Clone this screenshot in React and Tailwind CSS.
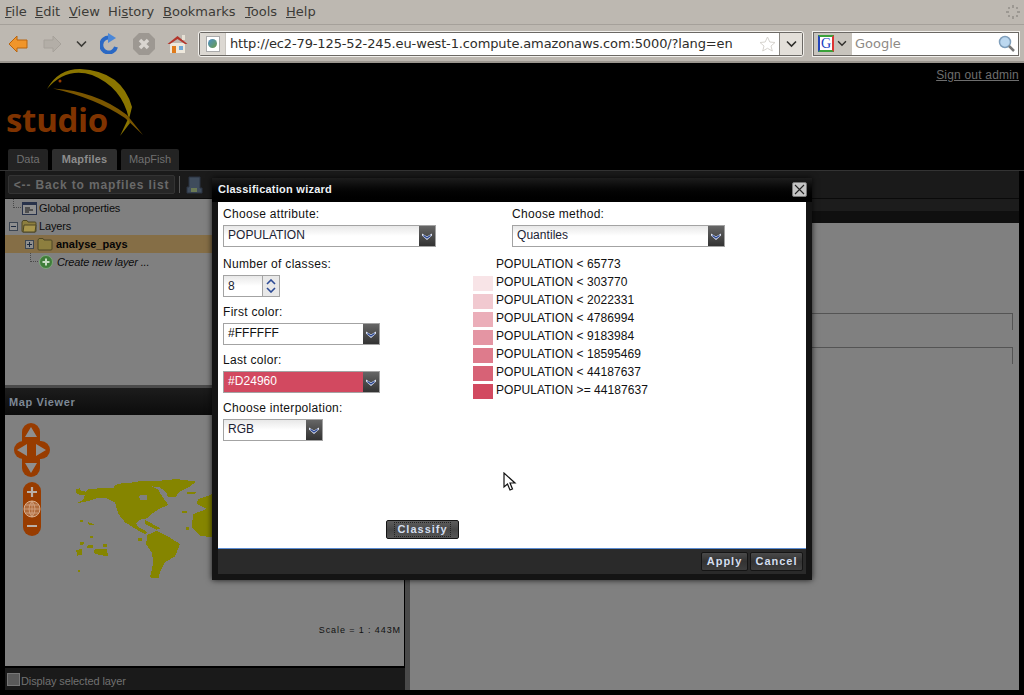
import React from 'react';

const MENU = [
  ['F', 'ile', 'w-[30px]'],
  ['E', 'dit', 'w-[34px]'],
  ['V', 'iew', 'w-[39px]'],
  ['Hi', 'story', 'w-[55px]', 's'],
  ['B', 'ookmarks', 'w-[82px]'],
  ['T', 'ools', 'w-[41px]'],
  ['H', 'elp', 'w-[40px]'],
];

const LEGEND = [
  ['POPULATION < 65773', 'bg-white'],
  ['POPULATION < 303770', 'bg-[#f8e4e7]'],
  ['POPULATION < 2022331', 'bg-[#f1c9d0]'],
  ['POPULATION < 4786994', 'bg-[#ebaeb9]'],
  ['POPULATION < 9183984', 'bg-[#e495a3]'],
  ['POPULATION < 18595469', 'bg-[#de7b8c]'],
  ['POPULATION < 44187637', 'bg-[#d76276]'],
  ['POPULATION >= 44187637', 'bg-[#d24960]'],
];

const TriggerIcon = () => (
  <svg width="12" height="9" viewBox="0 0 12 9" fill="none">
    <path d="M1 1.5 L6 4.5 L11 1.5 L11 3.5 L6 8 L1 3.5 Z" fill="#dfe6f7" />
    <path d="M2.5 3.5 L6 6 L9.5 3.5" stroke="#25408f" strokeWidth="1.3" />
  </svg>
);

const Combo = ({ value, width, tone }) => (
  <div className={`flex h-[22px] border border-[#a3a3a3] ${width}`}>
    <div className={`flex-1 pl-1 pb-[3px] flex items-center text-[12px] tracking-[0.05px] ${tone || 'bg-gradient-to-b from-[#e8e8e8] via-white to-white text-[#1c2333]'}`}>
      {value}
    </div>
    <div className="w-[16px] bg-gradient-to-b from-[#666] to-[#333] flex items-center justify-center">
      <TriggerIcon />
    </div>
  </div>
);

const Label = ({ children, className }) => (
  <div className={`text-[12px] leading-[14px] tracking-[0.3px] text-[#111] ${className || ''}`}>{children}</div>
);

const DarkButton = ({ children, className }) => (
  <div className={`flex items-center justify-center rounded-[2px] border border-[#151515] bg-gradient-to-b text-[11px] font-bold tracking-[1px] text-[#d3deee] ${className}`}>
    {children}
  </div>
);

const Folder = ({ open }) => (
  <svg width="16" height="14" viewBox="0 0 16 14">
    <path d="M1 3 L1 12 Q1 13 2 13 L14 13 Q15 13 15 12 L15 4 Q15 3 14 3 L7 3 L6 1.5 L2 1.5 Z" fill="#8d7f3f" stroke="#4d4726" />
    {open && <path d="M3 6 L15 6 L14 13 L2 13 Z" fill="#a8964c" stroke="#4d4726" />}
  </svg>
);

const Expander = ({ minus }) => (
  <div className="w-[9px] h-[9px] border border-[#3d4652] bg-[#8f8f8f] relative">
    <div className="absolute left-[1px] right-[1px] top-[3px] h-px bg-[#1d2a3f]" />
    {!minus && <div className="absolute top-[1px] bottom-[1px] left-[3px] w-px bg-[#1d2a3f]" />}
  </div>
);

const Connector = () => (
  <div className="w-[8px] h-[9px] self-start border-l border-b border-dotted border-[#4a4a4a] shrink-0" />
);

const BrowserToolbar = () => (
  <div className="h-[38px] bg-[#bdb8b1] border-b-2 border-[#9b968f] flex items-center pl-[8px] pr-[5px] pt-px">
    <svg width="20" height="18" viewBox="0 0 20 18" className="mr-[15px] shrink-0">
      <path d="M1 9 L9 1 L9 5 L19 5 L19 13 L9 13 L9 17 Z" fill="#f0952a" stroke="#b9640f" />
    </svg>
    <svg width="19" height="18" viewBox="0 0 19 18" className="mr-[14px] shrink-0">
      <path d="M18 9 L10 1 L10 5 L1 5 L1 13 L10 13 L10 17 Z" fill="#b3aea7" stroke="#a6a19a" />
    </svg>
    <svg width="11" height="8" viewBox="0 0 11 8" className="mr-[13px] shrink-0">
      <path d="M1 1.5 L5.5 6 L10 1.5" fill="none" stroke="#3c3b37" strokeWidth="1.6" />
    </svg>
    <svg width="20" height="21" viewBox="0 0 20 21" className="mr-[12px] shrink-0">
      <path d="M16 14 A7.5 7.5 0 1 1 9 4.5" fill="none" stroke="#2a68c4" strokeWidth="4" />
      <path d="M8 0 L16 5 L8 10 Z" fill="#4a87d8" />
    </svg>
    <svg width="24" height="24" viewBox="0 0 24 24" className="mr-[11px] shrink-0">
      <path d="M7 1 L17 1 L23 7 L23 17 L17 23 L7 23 L1 17 L1 7 Z" fill="#9d9892" />
      <path d="M8 8 L16 16 M16 8 L8 16" stroke="#d9d5d0" strokeWidth="3.5" />
    </svg>
    <svg width="21" height="20" viewBox="0 0 21 20" className="mr-[11px] shrink-0">
      <path d="M3 9 L18 9 L18 19 L3 19 Z" fill="#eee8dc" />
      <path d="M0.5 10 L10.5 2 L20.5 10 L18 10 L10.5 5 L3 10 Z" fill="#b3352a" />
      <rect x="15" y="1" width="3" height="5" fill="#e6e0d4" />
      <rect x="5" y="12" width="4" height="7" fill="#e07b1a" />
      <rect x="12" y="12" width="4" height="4" fill="#6fa9d8" />
    </svg>
    <div className="w-[604px] shrink-0 h-[24px] flex items-stretch border border-[#6b6864] outline outline-1 outline-[#f2f0ec] rounded-[2px] bg-white mr-[10px]">
      <div className="w-[26px] shrink-0 bg-[#dcd8d2] flex items-center justify-center border-r border-[#c9c5bf]">
        <div className="w-[14px] h-[16px] bg-white border border-[#aaa] flex items-center justify-center">
          <div className="w-[9px] h-[9px] rounded-full bg-gradient-to-br from-[#4f8bc7] to-[#6c9a3c]" />
        </div>
      </div>
      <div className="flex-1 pl-[4px] flex items-center text-[13px] tracking-[-0.13px] font-['DejaVu_Sans',sans-serif] text-[#2e2d2a] whitespace-nowrap">
        http://ec2-79-125-52-245.eu-west-1.compute.amazonaws.com:5000/?lang=en
      </div>
      <div className="w-[24px] shrink-0 flex items-center justify-center">
        <svg width="17" height="16" viewBox="0 0 17 16">
          <path d="M8.5 1 L10.8 6 L16 6.5 L12 10 L13.3 15 L8.5 12.3 L3.7 15 L5 10 L1 6.5 L6.2 6 Z" fill="#fff" stroke="#d6d3ce" />
        </svg>
      </div>
      <div className="w-[23px] shrink-0 bg-[#e3dfd9] border-l border-[#8a8782] flex items-center justify-center">
        <svg width="11" height="8" viewBox="0 0 11 8">
          <path d="M1 1.5 L5.5 6 L10 1.5" fill="none" stroke="#2e2d2a" strokeWidth="1.6" />
        </svg>
      </div>
    </div>
    <div className="flex-1 h-[24px] flex items-stretch border border-[#6b6864] outline outline-1 outline-[#f2f0ec] bg-white">
      <div className="w-[38px] bg-[#c8c4bd] flex items-center pl-[4px] gap-[3px]">
        <div className="w-[16px] h-[17px] bg-white border-t-2 border-t-[#3aa13a] border-r-2 border-r-[#d33] border-b-2 border-b-[#3aa13a] border-l-2 border-l-[#2244bb] flex items-center justify-center text-[14px] leading-none font-['Liberation_Serif',serif] text-[#1a3cc0]">
          G
        </div>
        <svg width="10" height="7" viewBox="0 0 11 8">
          <path d="M1 1.5 L5.5 6 L10 1.5" fill="none" stroke="#2e2d2a" strokeWidth="1.6" />
        </svg>
      </div>
      <div className="flex-1 pl-[3px] flex items-center text-[13px] font-['DejaVu_Sans',sans-serif] text-[#8e8a85]">Google</div>
      <div className="w-[20px] flex items-center">
        <svg width="17" height="17" viewBox="0 0 17 17">
          <circle cx="7" cy="7" r="5.5" fill="#bcd8f0" stroke="#7f9fbc" strokeWidth="1.5" />
          <path d="M11 11 L16 16" stroke="#777" strokeWidth="2.5" />
        </svg>
      </div>
    </div>
  </div>
);

const MapViewer = () => (
  <div className="relative flex-1 bg-[#808080] overflow-hidden">
    <svg width="155" height="110" viewBox="0 0 465 330" className="absolute left-[55px] top-[54px]" shapeRendering="crispEdges">
      <path
        fill="#858500"
        fillRule="evenodd"
        d="M48,60 L60,58 L62,66 L78,68 L85,60 L120,58 L160,58 L165,48 L190,42 L225,40 L240,36 L290,36 L350,30 L410,38 L385,55 L360,68 L345,85 L325,85 L318,70 L300,55 L275,52 L295,62 L305,80 L325,108 L300,118 L275,135 L262,148 L240,152 L228,162 L235,175 L255,185 L262,192 L255,195 L240,188 L215,172 L195,160 L175,135 L165,100 L140,88 L110,88 L90,95 L50,103 L70,92 L75,78 L50,76 Z M235,80 L262,78 L262,92 L240,92 Z"
      />
      <path fill="#858500" d="M255,152 L300,178 L290,182 L255,165 Z" />
      <path fill="#858500" d="M262,198 L290,185 L320,200 L360,225 L345,262 L315,280 L300,310 L295,328 L270,325 L280,280 L275,250 L258,225 Z" />
      <path fill="#858500" d="M415,90 L445,80 L455,75 L455,205 L420,200 L395,175 L400,135 L440,120 L410,105 Z" />
      <path fill="#858500" d="M105,240 L140,240 L145,262 L120,258 L100,252 Z M48,243 L66,240 L66,258 L52,260 Z M60,218 L72,218 L70,228 L60,228 Z M80,230 L100,228 L100,238 L80,238 Z M60,154 L70,154 L70,160 L60,160 Z M85,160 L102,165 L100,170 L85,166 Z M380,68 L408,70 L405,76 L382,76 Z M365,125 L380,125 L380,133 L365,133 Z M378,174 L386,174 L386,182 L378,182 Z M235,207 L245,207 L245,215 L235,215 Z M54,303 L60,303 L60,309 L54,309 Z M90,200 L98,200 L98,206 L90,206 Z M130,226 L140,226 L140,234 L130,234 Z" />
    </svg>
    <svg width="38" height="56" viewBox="0 0 38 56" className="absolute left-[8px] top-[7px]">
      <rect x="9" y="1" width="18" height="54" rx="9" fill="#983c00" />
      <rect x="1" y="19" width="36" height="18" rx="9" fill="#983c00" />
      <path d="M18 5 L24 15 L12 15 Z M18 51 L24 41 L12 41 Z M4 28 L14 22 L14 34 Z M33 28 L23 22 L23 34 Z" fill="#8f8f8f" />
    </svg>
    <svg width="18" height="54" viewBox="0 0 18 54" className="absolute left-[18px] top-[67px]">
      <rect width="18" height="54" rx="9" fill="#983c00" />
      <path d="M4 10 L14 10 M9 5 L9 15 M4 44 L14 44" stroke="#b9b0a8" strokeWidth="2.2" />
      <circle cx="9" cy="27" r="8" fill="#b06b3c" stroke="#d8b090" />
      <path d="M1 27 L17 27 M2.5 23 L15.5 23 M2.5 31 L15.5 31 M9 19 L9 35 M9 19 Q3 27 9 35 M9 19 Q15 27 9 35" fill="none" stroke="#d8b090" strokeWidth="0.7" />
    </svg>
    <div className="absolute right-[3px] bottom-[30px] text-[9px] leading-[12px] tracking-[0.9px] text-[#111]">Scale = 1 : 443M</div>
  </div>
);

const LeftPanel = () => (
  <div className="w-[400px] flex flex-col">
    <div className="h-[186px] bg-[#808080] text-[11px] tracking-[-0.15px] text-[#0c0c0c]">
      <div className="h-[18px] flex items-center pl-[8px]">
        <Connector />
        <svg width="15" height="13" viewBox="0 0 15 13" className="ml-px">
          <rect x="0.5" y="0.5" width="14" height="12" fill="#8f8f8f" stroke="#28324a" />
          <rect x="1" y="1" width="13" height="2" fill="#28324a" />
          <path d="M3 6 L8 6 M3 8 L11 8 M3 10 L7 10" stroke="#111" />
        </svg>
        <span className="ml-[2px]">Global properties</span>
      </div>
      <div className="h-[18px] flex items-center pl-[4px] gap-[3px]">
        <Expander minus />
        <Folder open />
        <span className="-ml-[1px]">Layers</span>
      </div>
      <div className="h-[18px] flex items-center pl-[20px] gap-[3px] bg-[#856e46]">
        <Expander />
        <Folder />
        <span className="font-bold tracking-normal text-[#050505]">analyse_pays</span>
      </div>
      <div className="h-[18px] flex items-center pl-[25px]">
        <Connector />
        <svg width="14" height="14" viewBox="0 0 14 14" className="ml-px">
          <circle cx="7" cy="7" r="6.5" fill="#3f7d3a" stroke="#7da87a" />
          <path d="M3.5 7 L10.5 7 M7 3.5 L7 10.5" stroke="#c8dcc4" strokeWidth="2" />
        </svg>
        <span className="italic ml-[4px]">Create new layer ...</span>
      </div>
    </div>
    <div className="h-[3px] bg-[#4a4a4a]" />
    <div className="h-[27px] pt-[2px] bg-gradient-to-b from-[#1c1c1c] to-[#0c0c0c] flex items-center pl-[4px] text-[11px] font-bold text-[#7d8896] tracking-[0.6px]">
      Map Viewer
    </div>
    <div className="flex-1 flex flex-col border-r border-black">
      <MapViewer />
    </div>
    <div className="h-[2px] bg-black" />
    <div className="h-[22px] bg-[#1a1a1a] flex items-center pl-[2px] text-[11px] text-[#717171] tracking-[-0.1px]">
      <div className="w-[13px] h-[13px] border border-[#777] bg-[#5a5a5a] mr-px" />
      <span className="mt-[4px]">Display selected layer</span>
    </div>
  </div>
);

const RightPanel = () => (
  <div className="w-[609px] flex flex-col">
    <div className="h-[12px] bg-[#1c1c1c]" />
    <div className="h-[12px] bg-[#0f0f0f]" />
    <div className="flex-1 bg-[#808080] pl-[6px] pr-[6px] pt-[90px]">
      <div className="h-[17px] border-t border-r border-[#545454]" />
      <div className="h-[17px] mt-[17px] border-t border-r border-[#545454]" />
    </div>
  </div>
);

const Wizard = () => (
  <div className="absolute left-[212px] top-[178px] w-[600px] h-[402px] flex flex-col bg-[#141414] shadow-[0_0_6px_rgba(0,0,0,0.8)]">
    <div className="h-[24px] pb-[2px] flex items-center justify-between pl-[6px] pr-[5px] bg-gradient-to-b from-[#1d1d1d] to-black">
      <span className="text-[11px] font-bold tracking-[0.25px] text-[#eef2f6]">Classification wizard</span>
      <div className="w-[15px] h-[15px] rounded-[2px] bg-[#c4c4c4] border border-[#777] flex items-center justify-center">
        <svg width="11" height="11" viewBox="0 0 11 11">
          <path d="M1 1 L10 10 M10 1 L1 10" stroke="#222" strokeWidth="1.1" />
        </svg>
      </div>
    </div>
    <div className="mx-[6px] h-[347px] bg-white border-b border-[#5b8bd0] flex">
      <div className="w-[255px] pl-[5px] pt-[5px] flex flex-col">
        <Label className="mb-[4px]">Choose attribute:</Label>
        <Combo value="POPULATION" width="w-[213px]" />
        <Label className="mt-[10px] mb-[4px]">Number of classes:</Label>
        <div className="flex h-[22px] w-[57px] border border-[#a3a3a3]">
          <div className="flex-1 pl-1 pb-[1px] flex items-center text-[12px] text-[#1c2333] bg-gradient-to-b from-[#e8e8e8] via-white to-white">8</div>
          <div className="w-[17px] border-l border-[#a3a3a3] flex flex-col items-center justify-center gap-[2px] bg-[#e8e8e8]">
            <svg width="10" height="6" viewBox="0 0 10 6"><path d="M1 5 L5 1 L9 5" fill="none" stroke="#2c4a96" strokeWidth="1.6" /></svg>
            <svg width="10" height="6" viewBox="0 0 10 6"><path d="M1 1 L5 5 L9 1" fill="none" stroke="#2c4a96" strokeWidth="1.6" /></svg>
          </div>
        </div>
        <Label className="mt-[8px] mb-[4px]">First color:</Label>
        <Combo value="#FFFFFF" width="w-[157px]" tone="bg-white text-[#111]" />
        <Label className="mt-[8px] mb-[4px]">Last color:</Label>
        <Combo value="#D24960" width="w-[157px]" tone="bg-[#d24960] text-white" />
        <Label className="mt-[8px] mb-[4px]">Choose interpolation:</Label>
        <Combo value="RGB" width="w-[100px]" />
        <DarkButton className="w-[73px] h-[19px] mt-[79px] ml-[163px] from-[#5e5e5e] via-[#474747] to-[#565656] border-[#333]">
          <span className="px-[2px] border border-dotted border-[#222] leading-[13px]">Classify</span>
        </DarkButton>
      </div>
      <div className="flex-1 pt-[5px]">
        <div className="ml-[39px]">
          <Label className="mb-[4px]">Choose method:</Label>
          <Combo value="Quantiles" width="w-[213px]" />
        </div>
        <div className="mt-[9px]">
          {LEGEND.map(([text, swatch]) => (
            <div key={text} className="h-[18px] flex items-center gap-[3px]">
              <div className={`w-[20px] h-[15px] ${swatch}`} />
              <span className="text-[12px] tracking-[0.07px] text-[#111] -mt-[2px]">{text}</span>
            </div>
          ))}
        </div>
      </div>
    </div>
    <div className="mx-[6px] h-[25px] bg-[#2a2a2a] flex items-center justify-end gap-[2px] pr-[3px]">
      <DarkButton className="w-[47px] h-[19px] from-[#4a4a4a] via-[#333] to-[#3e3e3e]">Apply</DarkButton>
      <DarkButton className="w-[53px] h-[19px] from-[#4a4a4a] via-[#333] to-[#3e3e3e]">Cancel</DarkButton>
    </div>
  </div>
);

const App = () => {
  return (
    <div className="relative w-[1024px] h-[695px] overflow-hidden bg-black flex flex-col font-['Liberation_Sans',sans-serif]">
      {/* browser chrome */}
      <div className="h-[25px] bg-[#bdb8b1] border-b border-[#a5a09a] flex items-center pl-[5px] text-[13px] font-['DejaVu_Sans',sans-serif] text-[#3c3b37]">
        {MENU.map(([head, rest, width, tail]) => (
          <span key={head} className={width}>
            {tail ? head : <span className="underline">{head}</span>}
            {tail ? <><span className="underline">{tail}</span>{rest.slice(1)}</> : rest}
          </span>
        ))}
        <svg width="16" height="16" viewBox="0 0 16 16" className="ml-auto mr-[3px]">
          <g fill="#9c9892">
            <rect x="7" y="1" width="2" height="3" /><rect x="7" y="12" width="2" height="3" />
            <rect x="1" y="7" width="3" height="2" /><rect x="12" y="7" width="3" height="2" />
            <rect x="3" y="3" width="2" height="2" /><rect x="11" y="3" width="2" height="2" />
            <rect x="3" y="11" width="2" height="2" /><rect x="11" y="11" width="2" height="2" />
          </g>
        </svg>
      </div>
      <BrowserToolbar />

      {/* app header */}
      <div className="h-[86px] relative flex justify-between">
        <div className="relative w-[150px]">
          <svg width="150" height="80" viewBox="0 0 150 80" className="absolute left-0 top-0">
            <path d="M47 26 Q58 6 80 6 Q122 8 132 44 L129 56 Q122 24 92 12 Q66 4 47 26 Z" fill="#8a7500" />
            <path d="M53 25.5 Q96 28 127 52 L143 72 L125 55 Q95 35 53 25.5 Z" fill="#7a5600" />
            <path d="M128 56 L120 73 L130 60 Z" fill="#8a7500" />
            <circle cx="60" cy="18" r="1.5" fill="#983c00" />
          </svg>
          <span className="absolute left-[6px] top-[37px] text-[33px] leading-[40px] font-bold tracking-[-0.3px] text-[#7f3300] font-['Open_Sans',sans-serif]">studio</span>
        </div>
        <a className="mt-[6px] mr-[5px] h-[14px] text-[12px] leading-[13px] tracking-[0.2px] text-[#6e6e6e] underline">Sign out admin</a>
      </div>

      {/* tabs */}
      <div className="h-[22px] border-b border-[#333] flex items-end pl-[8px] gap-[4px] text-[11px]">
        <div className="w-[40px] h-[21px] rounded-t-[2px] bg-[#232323] text-[#707070] flex items-center justify-center">Data</div>
        <div className="w-[65px] h-[21px] rounded-t-[2px] bg-[#2e2e2e] text-[#8c8c8c] font-bold tracking-[0.2px] flex items-center justify-center">Mapfiles</div>
        <div className="w-[58px] h-[21px] rounded-t-[2px] bg-[#232323] text-[#707070] flex items-center justify-center">MapFish</div>
      </div>
      <div className="h-[28px] mx-[5px] bg-[#1a1a1a] border-b border-[#0a0a0a] flex items-center pl-[3px]">
        <div className="w-[167px] h-[19px] rounded-[2px] bg-[#262626] border border-[#333] flex items-center justify-center text-[12px] font-bold tracking-[0.85px] text-[#696969]">
          &lt;-- Back to mapfiles list
        </div>
        <div className="w-px h-[17px] bg-[#555] mx-[4px]" />
        <svg width="17" height="18" viewBox="0 0 17 18" className="ml-[2px]">
          <path d="M3 1 L14 1 L14 12 L16 12 L16 17 L1 17 L1 11 L3 11 Z" fill="#3f4c5c" stroke="#2a3340" />
          <rect x="5" y="12" width="6" height="4" fill="#6b7a55" />
        </svg>
      </div>

      {/* panels */}
      <div className="flex-1 flex mx-[5px] mb-[5px]">
        <LeftPanel />
        <div className="w-[5px] bg-[#4a4a4a]" />
        <RightPanel />
      </div>

      <Wizard />

      {/* mouse pointer */}
      <svg width="14" height="20" viewBox="0 0 14 20" className="absolute left-[503px] top-[472px]">
        <path d="M1 1 L1 15 L4.5 12 L7 18 L9.5 17 L7 11 L12 11 Z" fill="#fff" stroke="#111" strokeWidth="1.2" />
      </svg>
    </div>
  );
};

export default App;
